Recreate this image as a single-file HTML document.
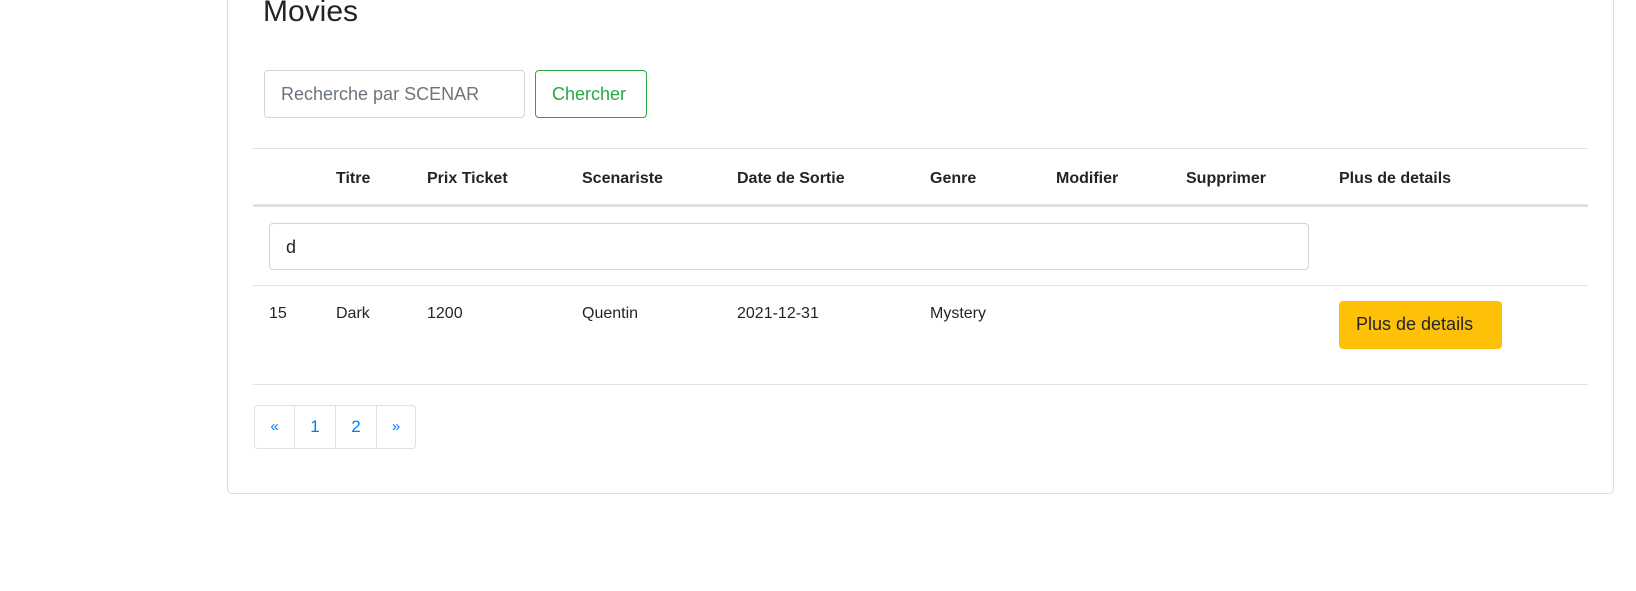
<!DOCTYPE html>
<html><head><meta charset="utf-8"><style>
*{box-sizing:border-box;margin:0;padding:0}
body{width:1636px;height:591px;background:#fff;font-family:"Liberation Sans",sans-serif;color:#212529;position:relative;overflow:hidden}
.a{position:absolute}
.card{left:227px;top:-20px;width:1387px;height:514px;border:1px solid #dcdcdc;border-radius:5px}
.hl{height:1px;background:#dee2e6;left:253px;width:1335px}
.th{font-weight:bold;font-size:16px;top:170px}
.td{font-size:16px;top:305px}
</style></head><body>
<div class="a card"></div>
<div class="a" style="left:263px;top:-6px;font-size:30px;line-height:36px">Movies</div>
<div class="a" style="left:264px;top:70px;width:261px;height:48px;border:1px solid #ced4da;border-radius:4px;font-size:18px;color:#6c757d;padding:13px 16px">Recherche par SCENAR</div>
<div class="a" style="left:535px;top:70px;width:112px;height:48px;border:1px solid #28a745;border-radius:4px;font-size:18px;color:#28a745;padding:13px 16px">Chercher</div>
<div class="a hl" style="top:148px"></div>
<div class="a th" style="left:336px">Titre</div>
<div class="a th" style="left:427px">Prix Ticket</div>
<div class="a th" style="left:582px">Scenariste</div>
<div class="a th" style="left:737px">Date de Sortie</div>
<div class="a th" style="left:930px">Genre</div>
<div class="a th" style="left:1056px">Modifier</div>
<div class="a th" style="left:1186px">Supprimer</div>
<div class="a th" style="left:1339px">Plus de details</div>
<div class="a hl" style="top:204px;height:3px"></div>
<div class="a" style="left:269px;top:223px;width:1040px;height:47px;border:1px solid #ced4da;border-radius:4px;font-size:18px;padding:13px 16px">d</div>
<div class="a hl" style="top:285px"></div>
<div class="a td" style="left:269px">15</div>
<div class="a td" style="left:336px">Dark</div>
<div class="a td" style="left:427px">1200</div>
<div class="a td" style="left:582px">Quentin</div>
<div class="a td" style="left:737px">2021-12-31</div>
<div class="a td" style="left:930px">Mystery</div>
<div class="a" style="left:1339px;top:301px;width:163px;height:48px;background:#ffc107;border-radius:4px;font-size:18px;padding:13px 17px">Plus de details</div>
<div class="a hl" style="top:384px"></div>
<div class="a" style="left:254px;top:405px;width:162px;height:44px;border:1px solid #dee2e6;border-radius:4px;display:flex;color:#007bff;font-size:17px">
<div style="width:40px;border-right:1px solid #dee2e6;text-align:center;line-height:42px;font-size:15px">«</div>
<div style="width:41px;border-right:1px solid #dee2e6;text-align:center;line-height:42px">1</div>
<div style="width:41px;border-right:1px solid #dee2e6;text-align:center;line-height:42px">2</div>
<div style="width:38px;text-align:center;line-height:42px;font-size:15px">»</div>
</div>
</body></html>
